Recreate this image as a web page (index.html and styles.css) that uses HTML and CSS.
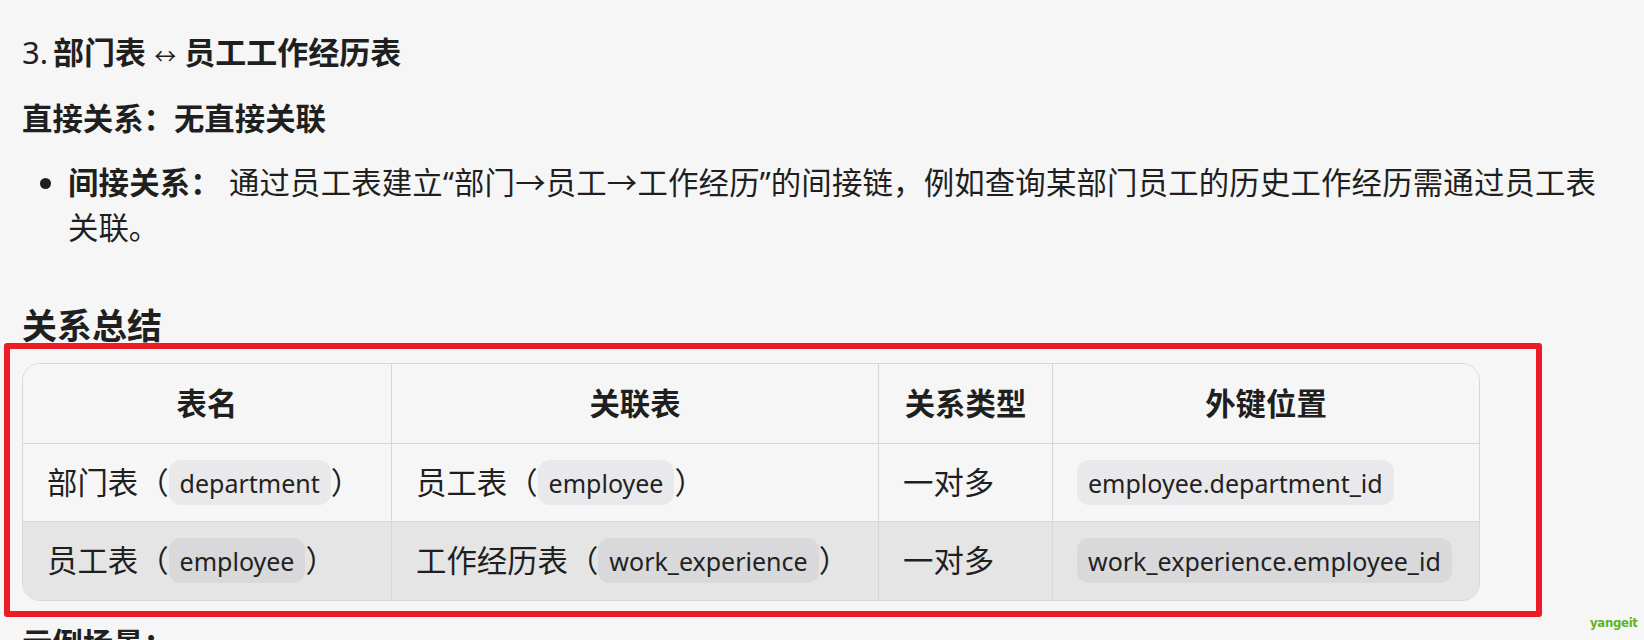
FILE: index.html
```html
<!DOCTYPE html>
<html lang="zh-CN">
<head>
<meta charset="utf-8">
<title>关系总结</title>
<link rel="stylesheet" href="styles.css">
</head>
<body>
<main class="doc">
  <h4 class="item-title"><span class="num">3.</span> <strong>部门表 <span class="arrow">↔</span> 员工工作经历表</strong></h4>
  <p class="direct"><strong>直接关系：无直接关联</strong></p>
  <ul class="bullets">
    <li><strong>间接关系：</strong> 通过员工表建立“部门→员工→工作经历”的间接链，例如查询某部门员工的历史工作经历需通过员工表关联。</li>
  </ul>
  <h3 class="summary">关系总结</h3>
  <div class="annotated">
    <div class="table-wrap">
      <table class="rel-table">
        <colgroup>
          <col class="c1"><col class="c2"><col class="c3"><col class="c4">
        </colgroup>
        <thead>
          <tr><th>表名</th><th>关联表</th><th>关系类型</th><th>外键位置</th></tr>
        </thead>
        <tbody>
          <tr>
            <td>部门表（<code>department</code>）</td>
            <td>员工表（<code>employee</code>）</td>
            <td>一对多</td>
            <td><code>employee.department_id</code></td>
          </tr>
          <tr class="alt">
            <td>员工表（<code>employee</code>）</td>
            <td>工作经历表（<code>work_experience</code>）</td>
            <td>一对多</td>
            <td><code>work_experience.employee_id</code></td>
          </tr>
        </tbody>
      </table>
    </div>
  </div>
  <p class="example"><strong>示例场景：</strong></p>
</main>
<div class="watermark">yangeit</div>
</body>
</html>
```

FILE: styles.css
```css
html, body {
  margin: 0;
  padding: 0;
  background: #f6f6f6;
}

body {
  font-family: "Noto Sans", "Noto Sans CJK SC", sans-serif;
  color: #1f1f1f;
  font-size: 30.4px;
  line-height: 45px;
  height: 640px;
  overflow: hidden;
  position: relative;
}

.doc {
  width: 1574px;
  padding: 30px 0 0 22px;
}

.item-title {
  margin: 0;
  font-size: 31px;
  line-height: 45px;
  font-weight: 400;
}

.item-title .num {
  margin-right: -3px;
}

.item-title strong {
  font-weight: 700;
}

.item-title .arrow {
  font-weight: 400;
  font-size: 22px;
}

.direct {
  margin: 18px 0 0;
}

.direct strong,
.bullets strong,
.example strong {
  font-weight: 700;
}

.bullets {
  margin: 19px 0 0;
  padding: 0 0 0 46px;
  list-style: disc;
}

.bullets li {
  text-align: justify;
}

.summary {
  margin: 55px 0 0;
  font-size: 35px;
  line-height: 42px;
  font-weight: 700;
}

.annotated {
  position: relative;
  width: fit-content;
  margin-top: 16px;
}

.annotated::after {
  content: "";
  position: absolute;
  top: -20px;
  left: -18px;
  right: -62px;
  bottom: -16px;
  border: 6px solid #ec1c24;
  border-radius: 3px;
  pointer-events: none;
}

.table-wrap {
  border: 1px solid #d3d8df;
  border-radius: 18px;
  overflow: hidden;
}

.rel-table {
  border-collapse: separate;
  border-spacing: 0;
  table-layout: fixed;
  width: 1456px;
}

.rel-table .c1 { width: 369px; }
.rel-table .c2 { width: 487px; }
.rel-table .c3 { width: 174px; }
.rel-table .c4 { width: 426px; }

.rel-table th,
.rel-table td {
  border-right: 1px solid #d3d8df;
  text-align: left;
  white-space: nowrap;
  font-size: 30.4px;
  line-height: 45px;
}

.rel-table th:last-child,
.rel-table td:last-child {
  border-right: 0;
}

.rel-table th {
  text-align: center;
  font-weight: 700;
  padding: 17px 24px;
  border-bottom: 1px solid #d3d8df;
  background: #f6f6f6;
}

.rel-table td {
  padding: 16px 24px;
  background: #f6f6f6;
}

.rel-table tbody tr:first-child td {
  border-bottom: 1px solid #d3d8df;
}

.rel-table tr.alt td {
  background: #e5e5e5;
  padding-bottom: 17px;
}

.rel-table code {
  display: inline-block;
  font-family: "Noto Sans", "Open Sans", sans-serif;
  font-size: 25px;
  line-height: 33px;
  height: 33px;
  padding: 7px 11px 5px;
  border-radius: 12px;
  background: rgba(30, 40, 60, 0.06);
  color: #222;
  vertical-align: top;
}

.example {
  margin: 20px 0 0;
}

.watermark {
  position: absolute;
  left: 1590px;
  top: 615px;
  font-family: "DejaVu Sans", sans-serif;
  font-stretch: condensed;
  font-weight: 700;
  font-size: 13px;
  line-height: 16px;
  color: #5cb326;
  letter-spacing: -0.3px;
}
```
